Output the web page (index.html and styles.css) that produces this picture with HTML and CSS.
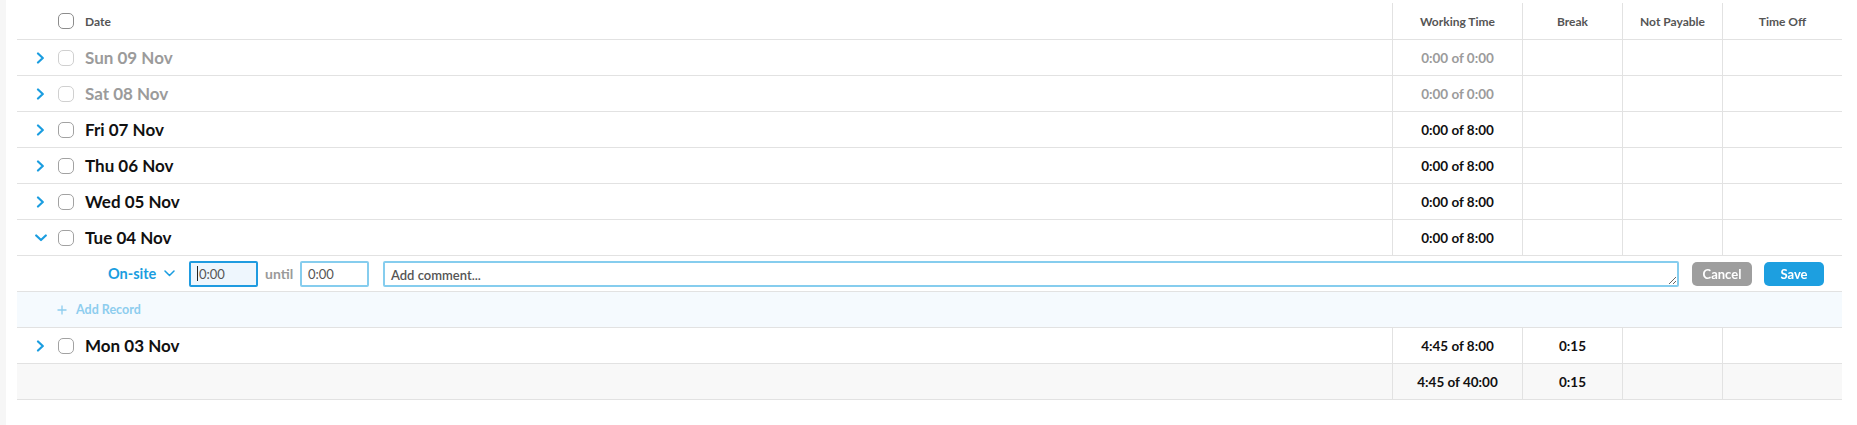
FILE: index.html
```html
<!DOCTYPE html>
<html lang="en">
<head>
<meta charset="utf-8">
<title>Timesheet</title>
<link rel="stylesheet" href="styles.css">
</head>
<body>
<div class="page">
  <div class="rail"></div>
  <div class="sheet">
    <div class="row head">
      <div class="cell date"><span class="chev"></span><span class="cb cb-head"></span><span class="hlabel">Date</span></div>
      <div class="cell num">Working Time</div>
      <div class="cell num">Break</div>
      <div class="cell num">Not Payable</div>
      <div class="cell num">Time Off</div>
    </div>

    <div class="row muted">
      <div class="cell date"><span class="chev"><svg width="12" height="12" viewBox="0 0 12 12"><path d="M3 1.5 L7.8 6 L3 10.5" fill="none" stroke="#1a9de0" stroke-width="2.2" stroke-linecap="round" stroke-linejoin="round"/></svg></span><span class="cb"></span><span class="day">Sun 09 Nov</span></div>
      <div class="cell num val">0:00 of 0:00</div>
      <div class="cell num"></div>
      <div class="cell num"></div>
      <div class="cell num"></div>
    </div>

    <div class="row muted">
      <div class="cell date"><span class="chev"><svg width="12" height="12" viewBox="0 0 12 12"><path d="M3 1.5 L7.8 6 L3 10.5" fill="none" stroke="#1a9de0" stroke-width="2.2" stroke-linecap="round" stroke-linejoin="round"/></svg></span><span class="cb"></span><span class="day">Sat 08 Nov</span></div>
      <div class="cell num val">0:00 of 0:00</div>
      <div class="cell num"></div>
      <div class="cell num"></div>
      <div class="cell num"></div>
    </div>

    <div class="row">
      <div class="cell date"><span class="chev"><svg width="12" height="12" viewBox="0 0 12 12"><path d="M3 1.5 L7.8 6 L3 10.5" fill="none" stroke="#1a9de0" stroke-width="2.2" stroke-linecap="round" stroke-linejoin="round"/></svg></span><span class="cb"></span><span class="day">Fri 07 Nov</span></div>
      <div class="cell num val">0:00 of 8:00</div>
      <div class="cell num"></div>
      <div class="cell num"></div>
      <div class="cell num"></div>
    </div>

    <div class="row">
      <div class="cell date"><span class="chev"><svg width="12" height="12" viewBox="0 0 12 12"><path d="M3 1.5 L7.8 6 L3 10.5" fill="none" stroke="#1a9de0" stroke-width="2.2" stroke-linecap="round" stroke-linejoin="round"/></svg></span><span class="cb"></span><span class="day">Thu 06 Nov</span></div>
      <div class="cell num val">0:00 of 8:00</div>
      <div class="cell num"></div>
      <div class="cell num"></div>
      <div class="cell num"></div>
    </div>

    <div class="row">
      <div class="cell date"><span class="chev"><svg width="12" height="12" viewBox="0 0 12 12"><path d="M3 1.5 L7.8 6 L3 10.5" fill="none" stroke="#1a9de0" stroke-width="2.2" stroke-linecap="round" stroke-linejoin="round"/></svg></span><span class="cb"></span><span class="day">Wed 05 Nov</span></div>
      <div class="cell num val">0:00 of 8:00</div>
      <div class="cell num"></div>
      <div class="cell num"></div>
      <div class="cell num"></div>
    </div>

    <div class="row">
      <div class="cell date"><span class="chev"><svg width="12" height="12" viewBox="0 0 12 12"><path d="M1.2 3.5 L6 8 L10.8 3.5" fill="none" stroke="#1a9de0" stroke-width="2.2" stroke-linecap="round" stroke-linejoin="round"/></svg></span><span class="cb"></span><span class="day">Tue 04 Nov</span></div>
      <div class="cell num val">0:00 of 8:00</div>
      <div class="cell num"></div>
      <div class="cell num"></div>
      <div class="cell num"></div>
    </div>

    <div class="editor">
      <span class="kind">On-site</span>
      <svg class="kind-chev" width="11" height="7" viewBox="0 0 11 7"><path d="M1 1 L5.5 5.5 L10 1" fill="none" stroke="#1a9de0" stroke-width="1.5" stroke-linecap="round" stroke-linejoin="round"/></svg>
      <div class="field field-focus"><span class="caret"></span>0:00</div>
      <span class="until">until</span>
      <div class="field">0:00</div>
      <textarea class="comment" placeholder="Add comment..."></textarea>
      <button class="btn btn-cancel" type="button">Cancel</button>
      <button class="btn btn-save" type="button">Save</button>
    </div>

    <div class="add">
      <svg width="10" height="10" viewBox="0 0 10 10"><path d="M5 0.5 V9.5 M0.5 5 H9.5" stroke="#8dcdee" stroke-width="1.3" fill="none"/></svg>
      <span class="add-label">Add Record</span>
    </div>

    <div class="row">
      <div class="cell date"><span class="chev"><svg width="12" height="12" viewBox="0 0 12 12"><path d="M3 1.5 L7.8 6 L3 10.5" fill="none" stroke="#1a9de0" stroke-width="2.2" stroke-linecap="round" stroke-linejoin="round"/></svg></span><span class="cb"></span><span class="day">Mon 03 Nov</span></div>
      <div class="cell num val">4:45 of 8:00</div>
      <div class="cell num val">0:15</div>
      <div class="cell num"></div>
      <div class="cell num"></div>
    </div>

    <div class="row total">
      <div class="cell date"></div>
      <div class="cell num val">4:45 of 40:00</div>
      <div class="cell num val">0:15</div>
      <div class="cell num"></div>
      <div class="cell num"></div>
    </div>
  </div>
</div>
</body>
</html>
```

FILE: styles.css
```css
* { box-sizing: border-box; }

html, body {
  margin: 0;
  padding: 0;
  background: #ffffff;
  font-family: Lato, "Open Sans", "Liberation Sans", sans-serif;
  color: #111111;
}

.page {
  display: flex;
  min-height: 425px;
}

.rail {
  width: 6px;
  background: #f6f6f6;
  flex: none;
}

.sheet {
  margin-left: 11px;
  width: 1825px;
}

.row {
  display: grid;
  grid-template-columns: 1375px 130px 100px 100px 120px;
  height: 36px;
  border-bottom: 1px solid #e2e2e2;
}

.cell {
  display: flex;
  align-items: center;
}

.cell + .cell {
  border-left: 1px solid #e2e2e2;
}

.num {
  justify-content: center;
}

.head {
  height: 40px;
  padding-top: 3px;
}

.head .cell {
  font-size: 12px;
  font-weight: 700;
  color: #555555;
}

.date {
  padding-left: 18px;
}

.chev {
  width: 12px;
  height: 12px;
  display: flex;
  flex: none;
}

.cb {
  width: 16px;
  height: 16px;
  margin-left: 11px;
  border: 1.5px solid #a2a2a2;
  border-radius: 5px;
  flex: none;
  background: #fff;
}

.cb-head { border-color: #8c8c8c; }

.muted .cb { border-color: #d0d0d0; }

.hlabel {
  margin-left: 11px;
}

.day {
  margin-left: 11px;
  font-size: 17px;
  font-weight: 700;
  color: #111111;
}

.muted .day,
.muted .val {
  color: #9b9b9b;
}

.val {
  font-size: 13.5px;
  font-weight: 700;
  color: #111111;
}

.editor {
  display: flex;
  align-items: center;
  height: 36px;
  border-bottom: 1px solid #e2e2e2;
  padding-left: 91px;
}

.kind {
  width: 47px;
  font-size: 14.5px;
  font-weight: 700;
  color: #1a9de0;
  white-space: nowrap;
  flex: none;
}

.kind-chev {
  margin-left: 9px;
  flex: none;
}

.field {
  width: 69px;
  height: 26px;
  border: 2px solid #86cdee;
  border-radius: 2px;
  display: flex;
  align-items: center;
  padding-left: 6px;
  font-size: 13px;
  color: #555555;
  flex: none;
}

.field-focus {
  margin-left: 14px;
  border-color: #1f9be0;
  background: #eef6fd;
}

.caret {
  width: 1px;
  height: 15px;
  background: #222;
  margin-right: 1px;
}

.until {
  width: 29px;
  margin: 0 6px 0 7px;
  font-size: 14px;
  font-weight: 700;
  color: #9a9a9a;
  flex: none;
}

.comment {
  margin-left: 14px;
  width: 1296px;
  height: 26px;
  border: 2px solid #86cdee;
  border-radius: 2px;
  padding: 4px 6px;
  font-family: Lato, "Open Sans", "Liberation Sans", sans-serif;
  font-size: 13px;
  font-weight: 600;
  color: #555;
  outline: none;
  flex: none;
}

.comment::placeholder {
  color: #555555;
  font-weight: 600;
}

.btn {
  width: 60px;
  height: 24px;
  border: none;
  border-radius: 5px;
  color: #ffffff;
  font-family: Lato, "Open Sans", "Liberation Sans", sans-serif;
  font-size: 13px;
  font-weight: 700;
  padding: 0;
  flex: none;
}

.btn-cancel {
  margin-left: 13px;
  background: #9e9e9e;
}

.btn-save {
  margin-left: 12px;
  background: #1d9fe0;
}

.add {
  display: flex;
  align-items: center;
  height: 36px;
  background: #f5fafe;
  border-bottom: 1px solid #e2e2e2;
  padding-left: 40px;
}

.add-label {
  margin-left: 9px;
  font-size: 12.5px;
  font-weight: 700;
  color: #8dcdee;
}

.total {
  background: #f8f8f8;
}
```
